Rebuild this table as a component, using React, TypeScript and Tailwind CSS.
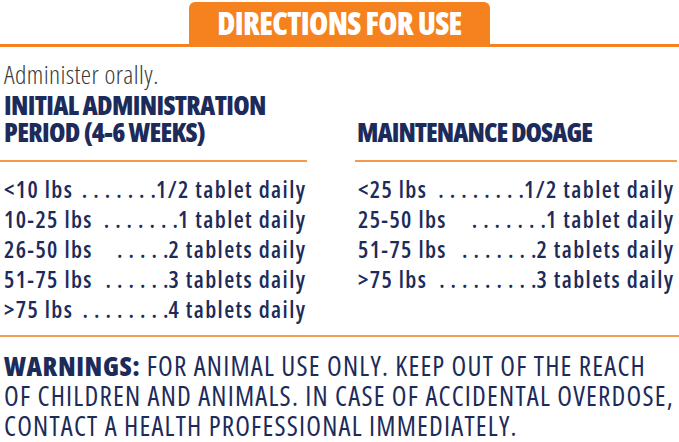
const navy = "text-[#1c2b5a]";

const initial = [
  { w: "<10 lbs", dots: ".......", dose: "1/2 tablet daily" },
  { w: "10-25 lbs", dots: ".......", dose: "1 tablet daily" },
  { w: "26-50 lbs", dots: ".....", dose: "2 tablets daily" },
  { w: "51-75 lbs", dots: "......", dose: "3 tablets daily" },
  { w: ">75 lbs", dots: "........", dose: "4 tablets daily" },
];

const maintenance = [
  { w: "<25 lbs", dots: "........", dose: "1/2 tablet daily" },
  { w: "25-50 lbs", dots: ".......", dose: "1 tablet daily" },
  { w: "51-75 lbs", dots: ".......", dose: "2 tablets daily" },
  { w: ">75 lbs", dots: ".........", dose: "3 tablets daily" },
];

function DoseRows({ rows }: { rows: typeof initial }) {
  return (
    <div className={`mt-[12px] flex flex-col font-semibold font-stretch-semi-condensed text-[23px] leading-[30px] tracking-[1.4px] ${navy}`}>
      {rows.map((r) => (
        <div key={r.w} className="flex justify-between whitespace-nowrap">
          <span>{r.w}</span>
          <span className="-mr-[1.4px]">
            <span className="tracking-[6px]">{r.dots.slice(1)}</span>
            <span className="tracking-[0px]">.</span>
            {r.dose}
          </span>
        </div>
      ))}
    </div>
  );
}

export default function App() {
  return (
    <div className="w-[679px] h-[442px] bg-white overflow-hidden font-['Open_Sans',sans-serif]">
      <div className="pt-[2px]">
        <div className="mx-auto w-[301px] h-[42px] rounded-t-[6px] bg-[#f5821f] flex items-center justify-center">
          <span className="text-white text-[31px] leading-none font-extrabold font-stretch-condensed tracking-[-0.7px]">
            DIRECTIONS FOR USE
          </span>
        </div>
        <div className="h-[3px] bg-[#f5821f]" />
      </div>

      <div className="grid grid-cols-[307px_1fr] gap-x-[48px]">
        <div className="pl-1">
          <p className="mt-[13px] text-[26px] leading-[28px] font-light font-stretch-condensed tracking-[0.4px] text-[#3a3a3a]">
            Administer orally.
          </p>
          <h2 className={`mt-[4px] text-[26.5px] leading-[27px] font-extrabold font-stretch-condensed tracking-[-0.65px] ${navy}`}>
            INITIAL ADMINISTRATION
            <br />
            PERIOD (4-6 WEEKS)
          </h2>
        </div>
        <div className="flex items-end pl-[2px]">
          <h2 className={`text-[26.5px] leading-[27px] font-extrabold font-stretch-condensed tracking-[-0.95px] ${navy}`}>
            MAINTENANCE DOSAGE
          </h2>
        </div>

        <div className="mt-[14px] h-[2px] bg-[#f29a4a]" />
        <div className="mt-[14px] h-[2px] bg-[#f29a4a] mr-[2px]" />

        <div className="pl-1 pr-[2px]">
          <DoseRows rows={initial} />
        </div>
        <div className="pl-[3px] pr-[6px]">
          <DoseRows rows={maintenance} />
        </div>
      </div>

      <div className="mt-[11px] h-[2px] bg-[#f0a055]" />

      <p className={`mt-[14px] pl-1 text-[27px] leading-[30px] font-medium font-stretch-condensed tracking-[1.2px] whitespace-nowrap ${navy}`}>
        <span className="font-extrabold tracking-[0.6px]">WARNINGS:</span> FOR ANIMAL USE ONLY. KEEP OUT OF THE REACH
        <br />
        OF CHILDREN AND ANIMALS. IN CASE OF ACCIDENTAL OVERDOSE,
        <br />
        CONTACT A HEALTH PROFESSIONAL IMMEDIATELY.
      </p>
    </div>
  );
}
